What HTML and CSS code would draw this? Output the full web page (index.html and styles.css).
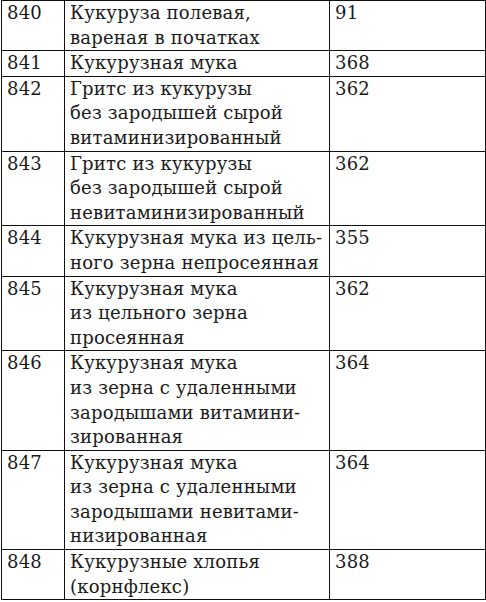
FILE: index.html
```html
<!DOCTYPE html>
<html lang="ru">
<head>
<meta charset="utf-8">
<link rel="stylesheet" href="styles.css">
</head>
<body>
<table class="tbl">
<colgroup><col class="c1"><col class="c2"><col class="c3"></colgroup>
<tbody>
<tr><td>840</td><td>Кукуруза полевая,<br>вареная в початках</td><td>91</td></tr>
<tr><td>841</td><td>Кукурузная мука</td><td>368</td></tr>
<tr><td>842</td><td>Гритс из кукурузы<br>без зародышей сырой<br>витаминизированный</td><td>362</td></tr>
<tr><td>843</td><td>Гритс из кукурузы<br>без зародышей сырой<br>невитаминизированный</td><td>362</td></tr>
<tr><td>844</td><td>Кукурузная мука из цель-<br>ного зерна непросеянная</td><td>355</td></tr>
<tr><td>845</td><td>Кукурузная мука<br>из цельного зерна<br>просеянная</td><td>362</td></tr>
<tr><td>846</td><td>Кукурузная мука<br>из зерна с удаленными<br>зародышами витамини-<br>зированная</td><td>364</td></tr>
<tr><td>847</td><td>Кукурузная мука<br>из зерна с удаленными<br>зародышами невитами-<br>низированная</td><td>364</td></tr>
<tr><td>848</td><td>Кукурузные хлопья<br>(корнфлекс)</td><td>388</td></tr>
</tbody>
</table>
</body>
</html>
```
FILE: styles.css
```css
html, body {
  margin: 0;
  padding: 0;
  background: #fff;
}
.tbl {
  border-collapse: collapse;
  table-layout: fixed;
  width: 484px;
  margin: 0 0 0 1px;
  font-family: "DejaVu Serif", "Liberation Serif", serif;
  font-size: 18px;
  line-height: 24.6px;
  letter-spacing: 0.2px;
  color: #1a1a1a;
}
.c1 { width: 63px; }
.c2 { width: 265px; }
.c3 { width: 156px; }
.tbl td {
  border: 1px solid #111;
  padding: 0 4px 0 5px;
  vertical-align: top;
  white-space: nowrap;
  overflow: hidden;
}
```
